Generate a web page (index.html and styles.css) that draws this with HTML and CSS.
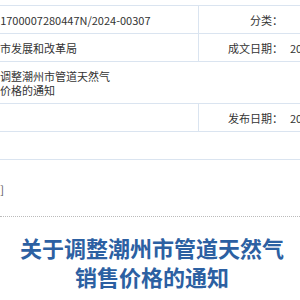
FILE: index.html
```html
<!DOCTYPE html>
<html lang="zh-CN">
<head>
    <meta charset="UTF-8">
    <title>关于调整潮州市管道天然气销售价格的通知</title>
    <link rel="stylesheet" href="styles.css">
</head>
<body>
    <div class="page">

        <div class="meta">
            <div class="meta-row">
                <div class="label">索引号：</div>
                <div class="value"><span class="pre">114-</span>1700007280447N/2024-00307</div>
                <div class="label label-mid">分类：</div>
                <div class="value value-right"></div>
            </div>
            <div class="meta-row">
                <div class="label">发布机构：</div>
                <div class="value">潮州市发展和改革局</div>
                <div class="label label-mid">成文日期：</div>
                <div class="value value-right">2024-07-01</div>
            </div>
            <div class="meta-row">
                <div class="label">名称：</div>
                <div class="value value-wide"><span class="title-cell">关于调整潮州市管道天然气销售价格的通知</span></div>
            </div>
            <div class="meta-row">
                <div class="label">文号：</div>
                <div class="value"></div>
                <div class="label label-mid">发布日期：</div>
                <div class="value value-right">2024-07-01</div>
            </div>
            <div class="meta-row">
                <div class="label">主题词：</div>
                <div class="value value-wide"></div>
            </div>
        </div>

        <div class="tools">[打印]</div>

        <h1 class="doc-title">关于调整潮州市管道天然气<br>销售价格的通知</h1>
    </div>
</body>
</html>
```

FILE: styles.css
```css
html, body {
    margin: 0;
    overflow: hidden;
}
body {
    font-family: "Microsoft YaHei", "Noto Sans CJK SC", sans-serif;
    font-size: 11px;
    color: #333;
    background-color: white;
}
.page {
    width: 300px;
}
.meta {
    margin-top: 5px;
    margin-left: -130px;
    width: 460px;
    border-top: 1px solid #dae4f0;
}
.meta-row {
    display: grid;
    grid-template-columns: 108px 220px 85px 47px;
    border-bottom: 1px solid #dae4f0;
}
.label, .value {
    padding: 7px 0 6px;
    line-height: 14px;
    min-height: 14px;
    white-space: nowrap;
}
.label {
    text-align: right;
}
.label-mid {
    border-left: 1px solid #dae4f0;
}
.value-right {
    padding-left: 7px;
}
.value-wide {
    grid-column: 2 / 5;
    white-space: normal;
}
.title-cell {
    display: block;
    width: 12.3em;
}
.tools {
    margin-top: 22px;
    margin-left: -42px;
    width: 46px;
    text-align: right;
    line-height: 14px;
    color: #555;
    white-space: nowrap;
}
.doc-title {
    margin: 20px 0 0;
    padding-top: 16px;
    padding-left: 4px;
    border-top: 1px dotted #bbb;
    font-size: 22px;
    line-height: 29px;
    font-weight: bold;
    color: #2c60a2;
    text-align: center;
}
```
